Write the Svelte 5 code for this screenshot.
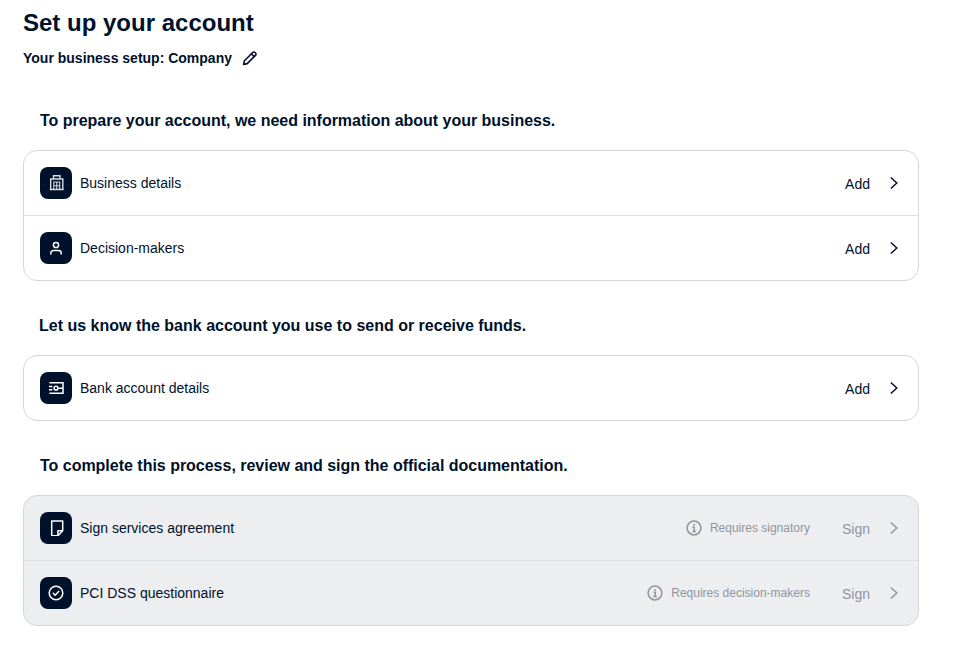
<script>
  const setup = [
    {
      title: 'To prepare your account, we need information about your business.',
      rows: [
        { icon: 'building', label: 'Business details', action: 'Add' },
        { icon: 'person', label: 'Decision-makers', action: 'Add' }
      ]
    },
    {
      title: 'Let us know the bank account you use to send or receive funds.',
      shifted: true,
      rows: [{ icon: 'bank', label: 'Bank account details', action: 'Add' }]
    },
    {
      title: 'To complete this process, review and sign the official documentation.',
      disabled: true,
      rows: [
        { icon: 'doc', label: 'Sign services agreement', action: 'Sign', note: 'Requires signatory' },
        { icon: 'check', label: 'PCI DSS questionnaire', action: 'Sign', note: 'Requires decision-makers' }
      ]
    }
  ];
</script>

<main>
  <h1>Set up your account</h1>
  <div class="setup-type">
    <span>Your business setup: Company</span>
    <svg width="16" height="16" viewBox="0 0 16 16" fill="none" stroke="currentColor" stroke-width="1.6" stroke-linejoin="round">
      <path d="M1.600 14.400l.8-3.600 8.300-8.300a1.600 1.600 0 0 1 2.300 0l.5.5a1.600 1.600 0 0 1 0 2.300l-8.300 8.300z" />
      <path d="M9.400 3.800l2.800 2.800" />
    </svg>
  </div>

  {#each setup as section}
    <section>
      <h2 class:shifted={section.shifted}>{section.title}</h2>
      <div class="card" class:disabled={section.disabled}>
        {#each section.rows as row}
          <div class="row">
            <div class="icon">
              <svg width="16" height="16" viewBox="0 0 16 16" fill="none" stroke="currentColor" stroke-width="1.4">
                {#if row.icon === 'building'}
                  <path d="M5.500 4V.8h6.500V4M2.700 14.500V4h12.100v10.500M1.800 14.500h13.900" stroke="#d9dbe0" />
                  <path d="M5.800 7h5.900v7.500H5.800zM8.750 7v7.500M5.800 10.700h5.900" stroke-width="1.100" stroke="#d9dbe0" />
                {:else if row.icon === 'person'}
                  <circle cx="8" cy="5" r="2.600" stroke-width="1.500" />
                  <path d="M2.800 14v-.8A2.700 2.700 0 0 1 5.500 10.500h5a2.700 2.700 0 0 1 2.700 2.700v.8" stroke-linecap="round" stroke-width="1.500" />
                {:else if row.icon === 'bank'}
                  <path d="M1.500 2.800h13.500v10.400H1.500M1 6.600h3.400M1 9.700h3.400M10.400 8.200h4.600" stroke-width="1.500" />
                  <circle cx="8" cy="8.200" r="1.900" stroke-width="1.500" />
                {:else if row.icon === 'doc'}
                  <path d="M3.700 1h11v9.800l-4.800 4.900H3.700zM14.700 10.800H9.900v4.900" stroke-linejoin="round" stroke-width="1.500" />
                {:else}
                  <circle cx="8" cy="8" r="6.800" stroke-width="1.500" />
                  <path d="M5.200 8.200l2 2 3.600-4" stroke-linecap="round" stroke-linejoin="round" stroke-width="1.500" />
                {/if}
              </svg>
            </div>
            <span class="label">{row.label}</span>
            {#if row.note}
              <span class="note">
                <svg width="16" height="16" viewBox="0 0 16 16" fill="none" stroke="currentColor" stroke-width="1.5">
                  <circle cx="8" cy="8" r="6.900" />
                  <path d="M6.500 7.200H8.200V11.600M6.300 11.600h3.600" />
                  <path d="M8 4.100v1.600" stroke-width="1.700" />
                </svg>
                {row.note}
              </span>
            {/if}
            <span class="action">{row.action}</span>
            <svg class="chevron" width="16" height="16" viewBox="0 0 16 16" fill="none" stroke="currentColor" stroke-width="1.5">
              <path d="M5.800 2.500l6 5.500-6 5.500" />
            </svg>
          </div>
        {/each}
      </div>
    </section>
  {/each}
</main>

<style>
  :global(body) {
    background: #fff;
  }

  main {
    width: 896px;
    padding: 9px 0 0 23px;
    font-family: "Liberation Sans", Arial, sans-serif;
    color: #00112c;
  }

  h1 {
    margin: 0;
    font-size: 24px;
    line-height: 28px;
    font-weight: 700;
  }

  .setup-type {
    display: flex;
    align-items: center;
    gap: 10px;
    margin-top: 11px;
    font-size: 14px;
    line-height: 20px;
    font-weight: 700;
  }

  section { margin-top: 35px; }
  .setup-type + section { margin-top: 43px; }

  h2 {
    margin: 0 0 19px 17px;
    font-size: 16px;
    line-height: 20px;
    font-weight: 700;
    letter-spacing: -0.015px;
  }
  h2.shifted { margin-left: 16px; letter-spacing: 0; }

  .card {
    border: 1px solid #d5d7dc;
    border-radius: 14px;
    background: #fff;
  }
  .card.disabled { background: #edeef0; }

  .row {
    display: flex;
    align-items: center;
    height: 64px;
    padding: 0 17px 0 16px;
  }
  .row + .row { border-top: 1px solid #dcdee2; }

  .icon {
    width: 32px;
    height: 32px;
    display: flex;
    align-items: center;
    justify-content: center;
    margin-right: 8px;
    border-radius: 8px;
    background: #00112c;
    color: #fff;
  }

  .label {
    flex: 1;
    font-size: 14px;
    line-height: 20px;
  }

  .note {
    display: flex;
    align-items: center;
    gap: 8px;
    margin-right: 32px;
    font-size: 12px;
    color: #8f95a1;
  }

  .action {
    font-size: 14px;
    margin-right: 15px;
    position: relative;
    top: 1px;
  }
  .disabled .action, .disabled .chevron { color: #8f95a1; }
  .chevron { margin-top: -1px; }
</style>
